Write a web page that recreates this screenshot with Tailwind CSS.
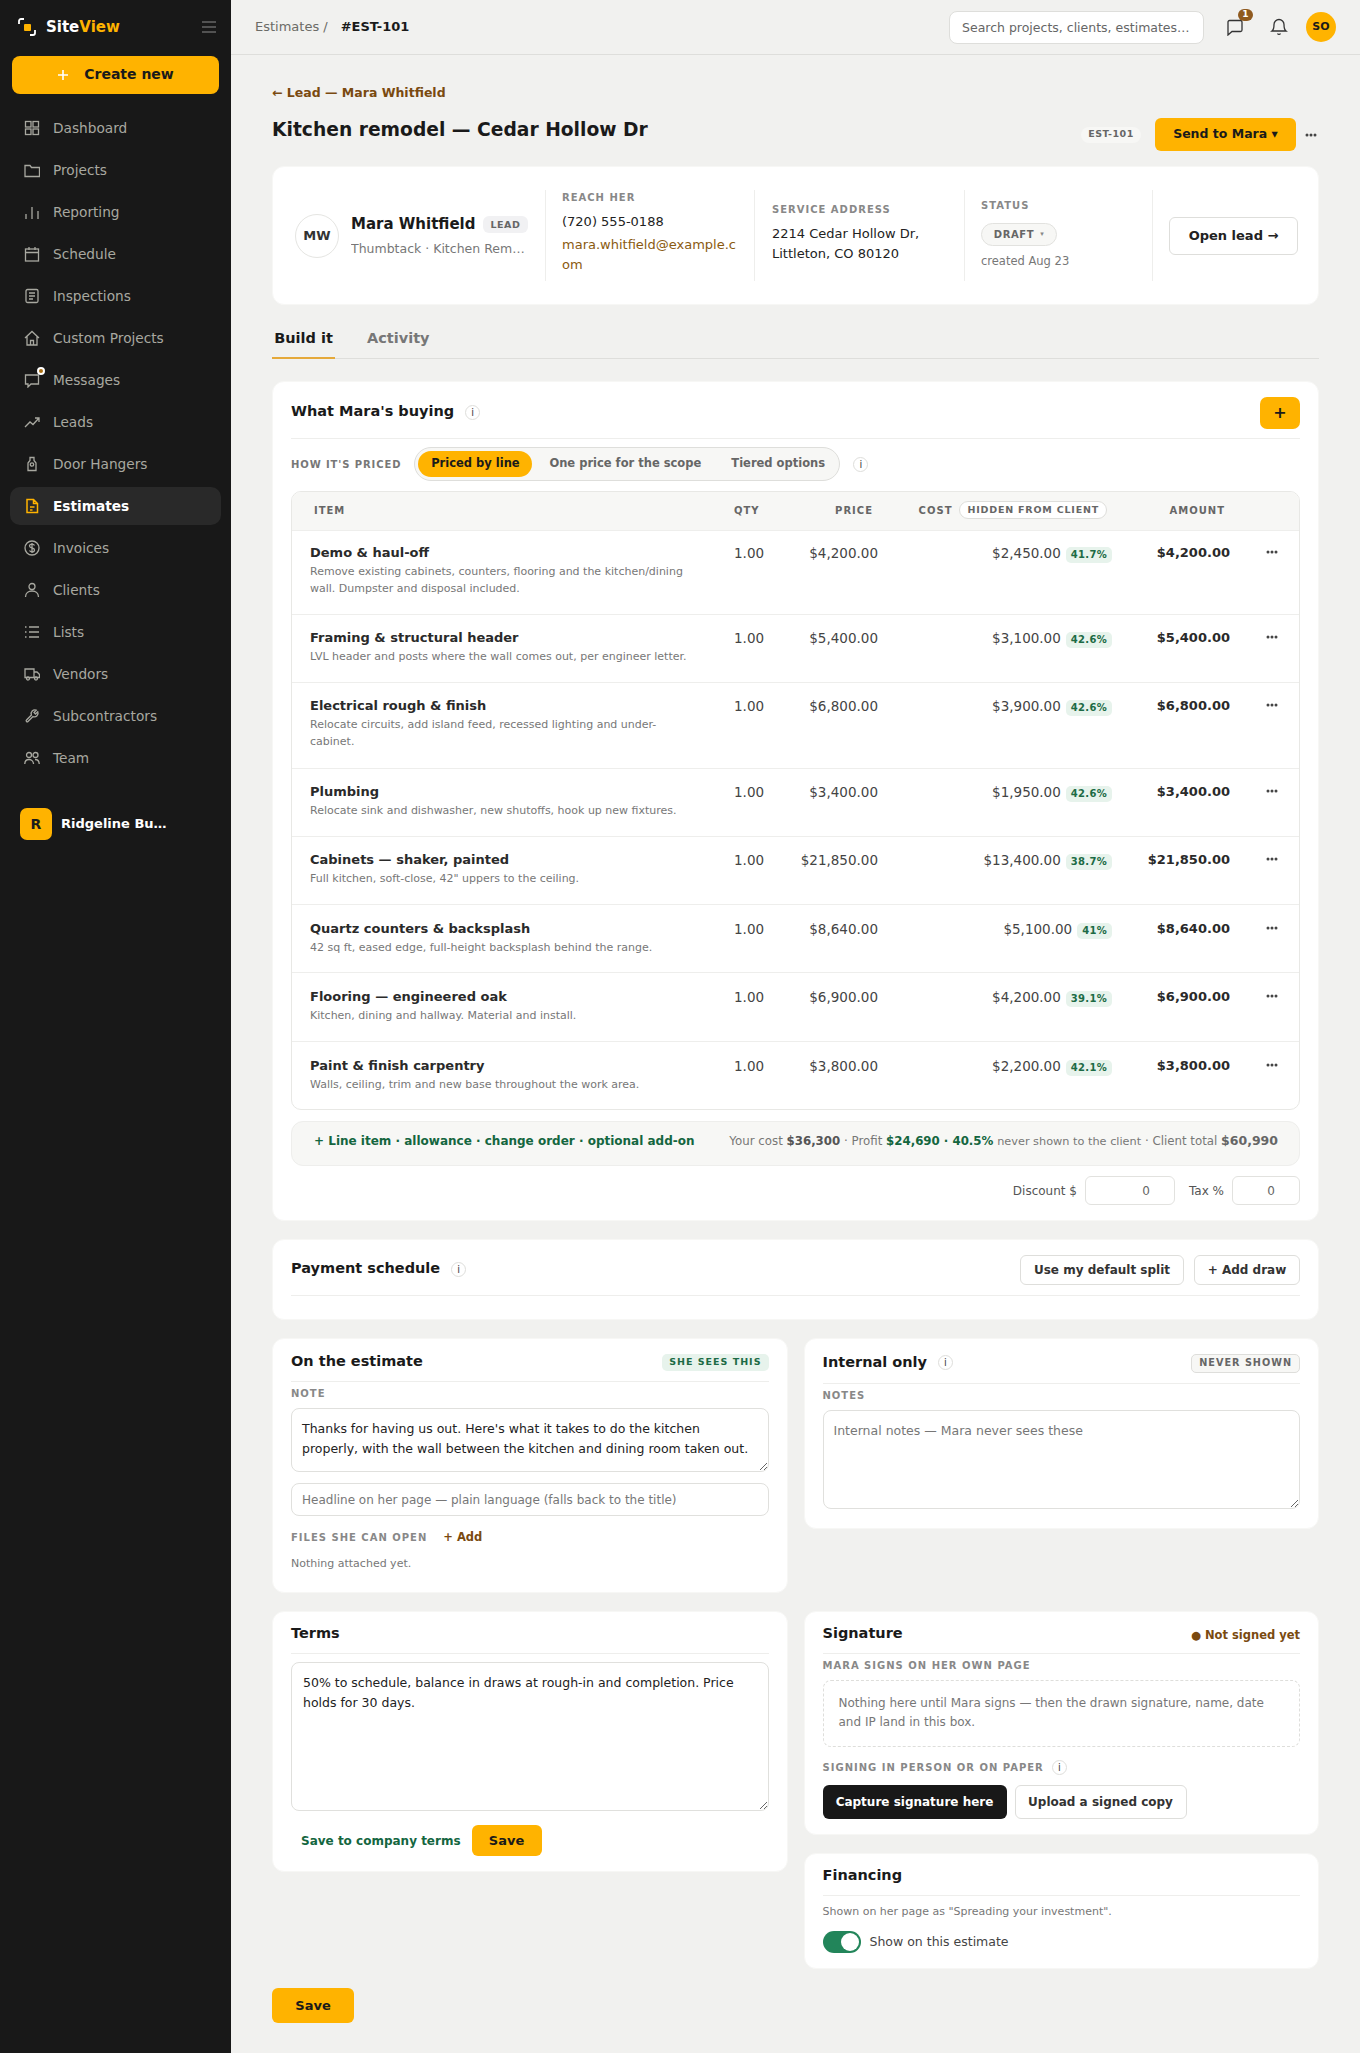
<!doctype html>
<html lang="en"><head><meta charset="utf-8"><title>Estimate</title>
<script src="https://cdn.jsdelivr.net/npm/@tailwindcss/browser@4"></script></head>
<body class="bg-[#f1f1ef] font-['DejaVu_Sans',sans-serif] text-[#1a1a1a]">
<div class="flex min-h-[2053px] w-[1360px]">
<aside class="w-[231px] shrink-0 bg-[#181818] px-[10px]">
  <div class="flex h-[54px] items-center pl-[8px] pr-[5px]">
    <svg class="h-[18px] w-[18px] shrink-0" viewBox="0 0 18 18" fill="none"><path d="M1 6V3a2 2 0 0 1 2-2h3M17 12v3a2 2 0 0 1-2 2h-3" stroke="#fff" stroke-width="1.8"/><rect x="6" y="6" width="7" height="7" rx="1" fill="#ffb300"/></svg>
    <span class="ml-[10px] text-[15px] font-bold text-white">Site<span class="text-[#ffb300]">View</span></span>
    <svg class="ml-auto h-[14px] w-[14px] text-[#666]" viewBox="0 0 14 14" fill="none" stroke="currentColor" stroke-width="1.3"><path d="M0 2h14M0 7h14M0 12h14"/></svg>
  </div>
  <button class="mx-[2px] mt-[2px] flex h-[38px] w-[207px] items-center justify-center gap-[15px] rounded-[8px] bg-[#ffb300] pb-[1px] text-[14px] font-bold text-[#1a1a1a]"><svg class="h-[12px] w-[12px]" viewBox="0 0 12 12" stroke="#fff" stroke-width="1.6"><path d="M6 1v10M1 6h10"/></svg>Create new</button>
  <nav class="mt-[15px] flex flex-col gap-[4px] text-[13.7px] text-[#a8a8a0]">
    <a class="flex h-[38px] items-center gap-[13px] rounded-[10px] pl-[14px]"><svg class="h-[16px] w-[16px]" viewBox="0 0 16 16" fill="none" stroke="currentColor" stroke-width="1.3"><rect x="1.5" y="1.5" width="5.5" height="5.5"/><rect x="9" y="1.5" width="5.5" height="5.5"/><rect x="1.5" y="9" width="5.5" height="5.5"/><rect x="9" y="9" width="5.5" height="5.5"/></svg>Dashboard</a>
    <a class="flex h-[38px] items-center gap-[13px] rounded-[10px] pl-[14px]"><svg class="h-[16px] w-[16px]" viewBox="0 0 16 16" fill="none" stroke="currentColor" stroke-width="1.3"><path d="M1 3.5h5l1.5 2H15.500v9H1z"/></svg>Projects</a>
    <a class="flex h-[38px] items-center gap-[13px] rounded-[10px] pl-[14px]"><svg class="h-[16px] w-[16px]" viewBox="0 0 16 16" fill="none" stroke="currentColor" stroke-width="1.3"><path d="M2 10v5M8 3v12M14 7v8"/></svg>Reporting</a>
    <a class="flex h-[38px] items-center gap-[13px] rounded-[10px] pl-[14px]"><svg class="h-[16px] w-[16px]" viewBox="0 0 16 16" fill="none" stroke="currentColor" stroke-width="1.3"><rect x="1.500" y="3" width="13" height="12"/><path d="M1.500 6.500h13M5 1v3M11 1v3"/></svg>Schedule</a>
    <a class="flex h-[38px] items-center gap-[13px] rounded-[10px] pl-[14px]"><svg class="h-[16px] w-[16px]" viewBox="0 0 16 16" fill="none" stroke="currentColor" stroke-width="1.3"><rect x="2" y="1.500" width="12" height="13" rx="1.500"/><path d="M5 5h6M5 8h6M5 11h4"/></svg>Inspections</a>
    <a class="flex h-[38px] items-center gap-[13px] rounded-[10px] pl-[14px]"><svg class="h-[16px] w-[16px]" viewBox="0 0 16 16" fill="none" stroke="currentColor" stroke-width="1.3"><path d="M1 8l7-6.500L15 8M3 6.500V15h10V6.500M6.500 15v-4.500h3V15"/></svg>Custom Projects</a>
    <a class="flex h-[38px] items-center gap-[13px] rounded-[10px] pl-[14px]"><span class="relative h-[16px] w-[16px]"><svg class="h-[16px] w-[16px]" viewBox="0 0 16 16" fill="none" stroke="currentColor" stroke-width="1.3"><path d="M1.500 3h13v9H7l-3 3v-3H1.500z"/></svg><span class="absolute right-[-5px] top-[-5px] h-[8px] w-[8px] rounded-full border-[2px] border-white bg-[#a96e10]"></span></span>Messages</a>
    <a class="flex h-[38px] items-center gap-[13px] rounded-[10px] pl-[14px]"><svg class="h-[16px] w-[16px]" viewBox="0 0 16 16" fill="none" stroke="currentColor" stroke-width="1.3"><path d="M1 13l5-5 3 2.500L15 4M11 4h4v4"/></svg>Leads</a>
    <a class="flex h-[38px] items-center gap-[13px] rounded-[10px] pl-[14px]"><svg class="h-[16px] w-[16px]" viewBox="0 0 16 16" fill="none" stroke="currentColor" stroke-width="1.3"><path d="M6 1.500h4v3l2 2.500v7.500H4V7l2-2.500z"/><circle cx="8" cy="8.500" r="1.700"/></svg>Door Hangers</a>
    <a class="flex h-[38px] items-center gap-[13px] rounded-[10px] bg-[#292929] pl-[16px] font-bold text-white"><svg class="ml-[-2px] h-[16px] w-[16px] text-[#ffb300]" viewBox="0 0 16 16" fill="none" stroke="currentColor" stroke-width="1.500"><path d="M3 1.500h6.500L13.500 5.500V14.500H3zM9.500 1.500v4h4M6 9h4.500M6 12h2.500"/></svg>Estimates</a>
    <a class="flex h-[38px] items-center gap-[13px] rounded-[10px] pl-[14px]"><svg class="h-[16px] w-[16px]" viewBox="0 0 16 16" fill="none" stroke="currentColor" stroke-width="1.3"><circle cx="8" cy="8" r="7"/><path d="M10.500 5.500C10 4.500 9 4.200 8 4.200c-1.500 0-2.500.8-2.500 1.900 0 2.600 5 1.200 5 3.800 0 1.100-1 1.900-2.500 1.900-1 0-2-.4-2.500-1.300M8 3v10"/></svg>Invoices</a>
    <a class="flex h-[38px] items-center gap-[13px] rounded-[10px] pl-[14px]"><svg class="h-[16px] w-[16px]" viewBox="0 0 16 16" fill="none" stroke="currentColor" stroke-width="1.3"><circle cx="8" cy="4.500" r="3"/><path d="M1.500 15c0-4 3-6 6.500-6s6.500 2 6.500 6"/></svg>Clients</a>
    <a class="flex h-[38px] items-center gap-[13px] rounded-[10px] pl-[14px]"><svg class="h-[16px] w-[16px]" viewBox="0 0 16 16" fill="none" stroke="currentColor" stroke-width="1.3"><path d="M5 3h10M5 8h10M5 13h10M1 3h1.500M1 8h1.500M1 13h1.500"/></svg>Lists</a>
    <a class="flex h-[38px] items-center gap-[13px] rounded-[10px] pl-[14px]"><svg class="h-[16px] w-[16px]" viewBox="0 0 16 16" fill="none" stroke="currentColor" stroke-width="1.3"><path d="M1 3h9v8.500H1zM10 6h3l2.500 2.500v3H10"/><circle cx="4" cy="12.500" r="1.500"/><circle cx="12" cy="12.500" r="1.500"/></svg>Vendors</a>
    <a class="flex h-[38px] items-center gap-[13px] rounded-[10px] pl-[14px]"><svg class="h-[16px] w-[16px]" viewBox="0 0 16 16" fill="none" stroke="currentColor" stroke-width="1.3"><path d="M13.800 3.800l-2.300 2.200-1.500-1.500 2.200-2.300a3.700 3.700 0 0 0-4.800 4.800L2.500 12a1 1 0 0 0 1.500 1.500l5-4.900a3.700 3.700 0 0 0 4.800-4.800z"/></svg>Subcontractors</a>
    <a class="flex h-[38px] items-center gap-[13px] rounded-[10px] pl-[14px]"><svg class="h-[16px] w-[16px]" viewBox="0 0 16 16" fill="none" stroke="currentColor" stroke-width="1.3"><circle cx="5" cy="5" r="2.500"/><circle cx="11.500" cy="5" r="2.500"/><path d="M.8 14c0-3 2-4.500 4.200-4.500S9.500 11 9.500 14M11 9.500c2.500 0 4.200 1.500 4.200 4.500"/></svg>Team</a>
  </nav>
  <div class="mt-[31px] flex items-center gap-[9px] pl-[10px]">
    <span class="flex h-[32px] w-[32px] items-center justify-center rounded-[7px] bg-[#ffb300] text-[14px] font-bold text-[#1a1a1a]">R</span>
    <span class="w-[108px] truncate text-[13px] font-bold text-white">Ridgeline Builders</span>
  </div>
</aside>
<div class="min-w-0 flex-1">
  <header class="flex h-[55px] items-center border-b border-[#dededb] pl-[24px] pr-[24px]">
    <span class="text-[13px] text-[#6b6b66]">Estimates /</span>
    <span class="ml-[13px] text-[13px] font-bold">#EST-101</span>
    <input class="ml-auto h-[33px] w-[255px] rounded-[8px] border border-[#dededb] bg-white px-[12px] text-[12.500px] placeholder:text-[#666]" placeholder="Search projects, clients, estimates…">
    <span class="relative ml-[22px] h-[18px] w-[18px]"><svg class="h-[18px] w-[18px] text-[#333]" viewBox="0 0 18 18" fill="none" stroke="currentColor" stroke-width="1.3"><path d="M3.500 2.500h11a1.500 1.500 0 0 1 1.500 1.500v8a1.500 1.500 0 0 1-1.500 1.500H6L2 17V4a1.500 1.500 0 0 1 1.500-1.500z"/></svg><span class="absolute right-[-9px] top-[-9px] flex h-[12px] w-[15px] items-center justify-center rounded-full bg-[#8f5a1f] text-[9px] font-bold text-white">1</span></span>
    <svg class="ml-[26px] h-[18px] w-[18px] text-[#333]" viewBox="0 0 18 18" fill="none" stroke="currentColor" stroke-width="1.3"><path d="M9 1.500a5 5 0 0 0-5 5c0 5-2 6.500-2 6.500h14s-2-1.500-2-6.500a5 5 0 0 0-5-5zM7.500 15.500a1.700 1.700 0 0 0 3 0"/></svg>
    <span class="ml-[18px] flex h-[30px] w-[30px] items-center justify-center rounded-full bg-[#ffb300] text-[11px] font-bold">SO</span>
  </header>
  <main class="pl-[41px] pr-[41px]">
    <a class="mt-[29px] block text-[12.500px] font-semibold leading-[18px] text-[#7a4a10]">← Lead — Mara Whitfield</a>
    <div class="mt-[16px] flex h-[33px] items-center">
      <h1 class="mb-[9px] text-[18.700px] font-bold">Kitchen remodel — Cedar Hollow Dr</h1>
      <span class="ml-auto flex h-[16px] w-[60px] items-center justify-center rounded-[8px] bg-[#f7f7f5] text-[9.500px] font-semibold tracking-[0.5px] text-[#666]">EST-101</span>
      <button class="ml-[14px] h-[33px] w-[141px] rounded-[6px] bg-[#ffb300] text-[12.500px] font-bold">Send to Mara ▾</button>
      <svg class="ml-[9px] mr-[2px] h-[4px] w-[12px] text-[#444]" viewBox="0 0 12 4" fill="currentColor"><circle cx="2" cy="2" r="1.500"/><circle cx="6" cy="2" r="1.500"/><circle cx="10" cy="2" r="1.500"/></svg>
    </div>
    <section class="mt-[15px] flex h-[139px] items-center rounded-[12px] border border-[#f7f7f5] bg-white pl-[22px]">
      <div class="flex h-[91px] w-[251px] shrink-0 items-center border-r border-[#eeeeec]">
        <span class="flex h-[44px] w-[44px] shrink-0 items-center justify-center rounded-full border border-[#e5e5e2] text-[13px] font-semibold text-[#333]">MW</span>
        <div class="ml-[12px] min-w-0">
          <div class="flex items-center gap-[7px]"><b class="text-[15px] font-semibold">Mara Whitfield</b><span class="rounded-[6px] bg-[#f1f1f3] px-[8px] py-[2px] text-[9.500px] font-semibold leading-[13px] tracking-[0.5px] text-[#666]">LEAD</span></div>
          <div class="mt-[4px] w-[176px] truncate text-[12.500px] leading-[18px] text-[#777]">Thumbtack · Kitchen Remodel</div>
        </div>
      </div>
      <div class="flex h-[91px] w-[209px] shrink-0 flex-col justify-center border-r border-[#eeeeec] pb-[5px] pl-[16px] pr-[12px]">
        <div class="text-[10px] font-semibold leading-[14px] tracking-[1px] text-[#888]">REACH HER</div>
        <div class="mt-[7px] text-[13px] leading-[20px] text-[#222]">(720) 555-0188</div>
        <div class="mt-[3px] break-all text-[13px] leading-[20px] text-[#8a5a10]">mara.whitfield@example.com</div>
      </div>
      <div class="flex h-[91px] w-[210px] shrink-0 flex-col justify-center border-r border-[#eeeeec] pb-[4px] pl-[17px] pr-[12px]">
        <div class="text-[10px] font-semibold leading-[14px] tracking-[1px] text-[#888]">SERVICE ADDRESS</div>
        <div class="mt-[7px] text-[13px] leading-[20px] text-[#222]">2214 Cedar Hollow Dr,<br>Littleton, CO 80120</div>
      </div>
      <div class="flex h-[91px] w-[188px] shrink-0 flex-col justify-center border-r border-[#eeeeec] pb-[2px] pl-[16px]">
        <div class="text-[10px] font-semibold leading-[14px] tracking-[1px] text-[#888]">STATUS</div>
        <div class="mt-[10px] flex h-[23px] w-[76px] items-center justify-center gap-[6px] rounded-full border border-[#e2e2df] bg-[#f7f7f5] text-[10px] font-semibold tracking-[0.6px] text-[#666]">DRAFT <span class="text-[7px] text-[#888]">▾</span></div>
        <div class="mt-[6px] text-[11.500px] leading-[18px] text-[#777]">created Aug 23</div>
      </div>
      <button class="ml-[16px] h-[38px] w-[129px] rounded-[6px] border border-[#dededb] text-[13px] font-semibold text-[#222]">Open lead →</button>
    </section>
    <div class="mt-[14px] flex h-[40px] border-b border-[#dededb] text-[14.500px]">
      <span class="flex h-[40px] w-[63px] justify-center border-b-[2px] border-[#e5a93a] pt-[9px] font-bold">Build it</span>
      <span class="ml-[32px] pt-[9px] font-semibold text-[#777]">Activity</span>
    </div>
    <section class="mt-[22px] rounded-[12px] border border-[#f7f7f5] bg-white px-[18px] pt-[15px] pb-[15px]">
      <div class="flex h-[42px] items-start border-b border-[#eeeeec]">
        <h2 class="mt-[4px] text-[14.500px] font-semibold">What Mara's buying</h2>
        <span class="ml-[11px] mt-[8px] flex h-[15px] w-[15px] items-center justify-center rounded-full border border-[#dededb] text-[10px] text-[#444]">i</span>
        <button class="ml-auto flex h-[32px] w-[40px] items-center justify-center rounded-[7px] bg-[#ffb300] text-[16px] font-bold">+</button>
      </div>
      <div class="mt-[8px] flex h-[34px] items-center">
        <span class="text-[10px] font-semibold tracking-[0.9px] text-[#777]">HOW IT'S PRICED</span>
        <div class="ml-[13px] flex h-[34px] w-[426px] items-center rounded-full border border-[#dededb] bg-[#f7f7f5] pl-[3px] text-[11.500px] font-semibold text-[#666]">
          <span class="flex h-[26px] w-[114px] items-center justify-center rounded-full bg-[#ffb300] text-[#1a1a1a]">Priced by line</span>
          <span class="ml-[17px]">One price for the scope</span><span class="ml-[30px]">Tiered options</span>
        </div>
        <span class="ml-[13px] flex h-[15px] w-[15px] items-center justify-center rounded-full border border-[#dededb] text-[10px] text-[#444]">i</span>
      </div>
      <div class="mt-[10px] overflow-hidden rounded-[10px] border border-[#e8e8e5]">
        <div class="grid h-[38px] grid-cols-[442px_60px_84px_234px_118px_69px] items-center bg-[#f7f7f5] pb-[2px] text-[10px] font-semibold tracking-[1px] text-[#666]">
          <span class="pl-[22px]">ITEM</span><span>QTY</span><span class="pr-[5px] text-right">PRICE</span>
          <span class="flex items-center justify-end gap-[7px] pr-[5px]">COST <span class="rounded-full border border-[#dededb] bg-white px-[7px] py-[1px] text-[9.500px] leading-[14px] tracking-[0.8px]">HIDDEN FROM CLIENT</span></span>
          <span class="pr-[5px] text-right">AMOUNT</span><span></span>
        </div>

        <div class="grid h-[84px] grid-cols-[442px_60px_84px_234px_118px_69px] border-t border-[#eeeeec] pt-[12px] text-[13.500px] leading-[20px] text-[#444]">
          <div class="pl-[18px]"><b class="block text-[13px] font-semibold text-[#2a2a2a]">Demo &amp; haul-off</b><p class="w-[390px] text-[11px] leading-[17px] text-[#777]">Remove existing cabinets, counters, flooring and the kitchen/dining wall. Dumpster and disposal included.</p></div>
          <span>1.00</span><span class="text-right">$4,200.00</span>
          <span class="flex items-start justify-end gap-[5px]">$2,450.00 <i class="mt-[4px] rounded-[5px] bg-[#e7f3ec] px-[5px] text-[10px] font-semibold not-italic leading-[16px] tracking-[0.3px] text-[#1d6b45]">41.7%</i></span>
          <b class="text-right text-[13px] text-[#2a2a2a]">$4,200.00</b>
          <span class="pr-[21px] text-right text-[#444]"><svg class="ml-auto mt-[7px] h-[4px] w-[12px]" viewBox="0 0 12 4" fill="currentColor"><circle cx="2" cy="2" r="1.500"/><circle cx="6" cy="2" r="1.500"/><circle cx="10" cy="2" r="1.500"/></svg></span>
        </div>
        <div class="grid h-[68px] grid-cols-[442px_60px_84px_234px_118px_69px] border-t border-[#eeeeec] pt-[13px] text-[13.500px] leading-[20px] text-[#444]">
          <div class="pl-[18px]"><b class="block text-[13px] font-semibold text-[#2a2a2a]">Framing &amp; structural header</b><p class="w-[390px] text-[11px] leading-[17px] text-[#777]">LVL header and posts where the wall comes out, per engineer letter.</p></div>
          <span>1.00</span><span class="text-right">$5,400.00</span>
          <span class="flex items-start justify-end gap-[5px]">$3,100.00 <i class="mt-[4px] rounded-[5px] bg-[#e7f3ec] px-[5px] text-[10px] font-semibold not-italic leading-[16px] tracking-[0.3px] text-[#1d6b45]">42.6%</i></span>
          <b class="text-right text-[13px] text-[#2a2a2a]">$5,400.00</b>
          <span class="pr-[21px] text-right text-[#444]"><svg class="ml-auto mt-[7px] h-[4px] w-[12px]" viewBox="0 0 12 4" fill="currentColor"><circle cx="2" cy="2" r="1.500"/><circle cx="6" cy="2" r="1.500"/><circle cx="10" cy="2" r="1.500"/></svg></span>
        </div>
        <div class="grid h-[86px] grid-cols-[442px_60px_84px_234px_118px_69px] border-t border-[#eeeeec] pt-[13px] text-[13.500px] leading-[20px] text-[#444]">
          <div class="pl-[18px]"><b class="block text-[13px] font-semibold text-[#2a2a2a]">Electrical rough &amp; finish</b><p class="w-[390px] text-[11px] leading-[17px] text-[#777]">Relocate circuits, add island feed, recessed lighting and under-cabinet.</p></div>
          <span>1.00</span><span class="text-right">$6,800.00</span>
          <span class="flex items-start justify-end gap-[5px]">$3,900.00 <i class="mt-[4px] rounded-[5px] bg-[#e7f3ec] px-[5px] text-[10px] font-semibold not-italic leading-[16px] tracking-[0.3px] text-[#1d6b45]">42.6%</i></span>
          <b class="text-right text-[13px] text-[#2a2a2a]">$6,800.00</b>
          <span class="pr-[21px] text-right text-[#444]"><svg class="ml-auto mt-[7px] h-[4px] w-[12px]" viewBox="0 0 12 4" fill="currentColor"><circle cx="2" cy="2" r="1.500"/><circle cx="6" cy="2" r="1.500"/><circle cx="10" cy="2" r="1.500"/></svg></span>
        </div>
        <div class="grid h-[68px] grid-cols-[442px_60px_84px_234px_118px_69px] border-t border-[#eeeeec] pt-[13px] text-[13.500px] leading-[20px] text-[#444]">
          <div class="pl-[18px]"><b class="block text-[13px] font-semibold text-[#2a2a2a]">Plumbing</b><p class="w-[390px] text-[11px] leading-[17px] text-[#777]">Relocate sink and dishwasher, new shutoffs, hook up new fixtures.</p></div>
          <span>1.00</span><span class="text-right">$3,400.00</span>
          <span class="flex items-start justify-end gap-[5px]">$1,950.00 <i class="mt-[4px] rounded-[5px] bg-[#e7f3ec] px-[5px] text-[10px] font-semibold not-italic leading-[16px] tracking-[0.3px] text-[#1d6b45]">42.6%</i></span>
          <b class="text-right text-[13px] text-[#2a2a2a]">$3,400.00</b>
          <span class="pr-[21px] text-right text-[#444]"><svg class="ml-auto mt-[7px] h-[4px] w-[12px]" viewBox="0 0 12 4" fill="currentColor"><circle cx="2" cy="2" r="1.500"/><circle cx="6" cy="2" r="1.500"/><circle cx="10" cy="2" r="1.500"/></svg></span>
        </div>
        <div class="grid h-[68px] grid-cols-[442px_60px_84px_234px_118px_69px] border-t border-[#eeeeec] pt-[13px] text-[13.500px] leading-[20px] text-[#444]">
          <div class="pl-[18px]"><b class="block text-[13px] font-semibold text-[#2a2a2a]">Cabinets — shaker, painted</b><p class="w-[390px] text-[11px] leading-[17px] text-[#777]">Full kitchen, soft-close, 42" uppers to the ceiling.</p></div>
          <span>1.00</span><span class="text-right">$21,850.00</span>
          <span class="flex items-start justify-end gap-[5px]">$13,400.00 <i class="mt-[4px] rounded-[5px] bg-[#e7f3ec] px-[5px] text-[10px] font-semibold not-italic leading-[16px] tracking-[0.3px] text-[#1d6b45]">38.7%</i></span>
          <b class="text-right text-[13px] text-[#2a2a2a]">$21,850.00</b>
          <span class="pr-[21px] text-right text-[#444]"><svg class="ml-auto mt-[7px] h-[4px] w-[12px]" viewBox="0 0 12 4" fill="currentColor"><circle cx="2" cy="2" r="1.500"/><circle cx="6" cy="2" r="1.500"/><circle cx="10" cy="2" r="1.500"/></svg></span>
        </div>
        <div class="grid h-[68px] grid-cols-[442px_60px_84px_234px_118px_69px] border-t border-[#eeeeec] pt-[14px] text-[13.500px] leading-[20px] text-[#444]">
          <div class="pl-[18px]"><b class="block text-[13px] font-semibold text-[#2a2a2a]">Quartz counters &amp; backsplash</b><p class="w-[390px] text-[11px] leading-[17px] text-[#777]">42 sq ft, eased edge, full-height backsplash behind the range.</p></div>
          <span>1.00</span><span class="text-right">$8,640.00</span>
          <span class="flex items-start justify-end gap-[5px]">$5,100.00 <i class="mt-[4px] rounded-[5px] bg-[#e7f3ec] px-[5px] text-[10px] font-semibold not-italic leading-[16px] tracking-[0.3px] text-[#1d6b45]">41%</i></span>
          <b class="text-right text-[13px] text-[#2a2a2a]">$8,640.00</b>
          <span class="pr-[21px] text-right text-[#444]"><svg class="ml-auto mt-[7px] h-[4px] w-[12px]" viewBox="0 0 12 4" fill="currentColor"><circle cx="2" cy="2" r="1.500"/><circle cx="6" cy="2" r="1.500"/><circle cx="10" cy="2" r="1.500"/></svg></span>
        </div>
        <div class="grid h-[69px] grid-cols-[442px_60px_84px_234px_118px_69px] border-t border-[#eeeeec] pt-[14px] text-[13.500px] leading-[20px] text-[#444]">
          <div class="pl-[18px]"><b class="block text-[13px] font-semibold text-[#2a2a2a]">Flooring — engineered oak</b><p class="w-[390px] text-[11px] leading-[17px] text-[#777]">Kitchen, dining and hallway. Material and install.</p></div>
          <span>1.00</span><span class="text-right">$6,900.00</span>
          <span class="flex items-start justify-end gap-[5px]">$4,200.00 <i class="mt-[4px] rounded-[5px] bg-[#e7f3ec] px-[5px] text-[10px] font-semibold not-italic leading-[16px] tracking-[0.3px] text-[#1d6b45]">39.1%</i></span>
          <b class="text-right text-[13px] text-[#2a2a2a]">$6,900.00</b>
          <span class="pr-[21px] text-right text-[#444]"><svg class="ml-auto mt-[7px] h-[4px] w-[12px]" viewBox="0 0 12 4" fill="currentColor"><circle cx="2" cy="2" r="1.500"/><circle cx="6" cy="2" r="1.500"/><circle cx="10" cy="2" r="1.500"/></svg></span>
        </div>
        <div class="grid h-[68px] grid-cols-[442px_60px_84px_234px_118px_69px] border-t border-[#eeeeec] pt-[14px] text-[13.500px] leading-[20px] text-[#444]">
          <div class="pl-[18px]"><b class="block text-[13px] font-semibold text-[#2a2a2a]">Paint &amp; finish carpentry</b><p class="w-[390px] text-[11px] leading-[17px] text-[#777]">Walls, ceiling, trim and new base throughout the work area.</p></div>
          <span>1.00</span><span class="text-right">$3,800.00</span>
          <span class="flex items-start justify-end gap-[5px]">$2,200.00 <i class="mt-[4px] rounded-[5px] bg-[#e7f3ec] px-[5px] text-[10px] font-semibold not-italic leading-[16px] tracking-[0.3px] text-[#1d6b45]">42.1%</i></span>
          <b class="text-right text-[13px] text-[#2a2a2a]">$3,800.00</b>
          <span class="pr-[21px] text-right text-[#444]"><svg class="ml-auto mt-[7px] h-[4px] w-[12px]" viewBox="0 0 12 4" fill="currentColor"><circle cx="2" cy="2" r="1.500"/><circle cx="6" cy="2" r="1.500"/><circle cx="10" cy="2" r="1.500"/></svg></span>
        </div>
      </div>
      <div class="mt-[11px] flex h-[45px] items-center justify-between rounded-[12px] border border-[#eeeeec] bg-[#f7f7f5] pb-[5px] pl-[22px] pr-[21px]">
        <span class="text-[12px] font-semibold text-[#14663f]">+ Line item · allowance · change order · optional add-on</span>
        <span class="text-[11.800px] text-[#777]">Your cost <b class="font-semibold text-[#555]">$36,300</b> · Profit <b class="font-semibold text-[#14663f]">$24,690 · 40.5%</b> <span class="text-[11.300px]">never shown to the client</span> · Client total <b class="text-[12.500px] font-semibold text-[#666]">$60,990</b></span>
      </div>
      <div class="mt-[10px] flex items-center justify-end text-[12px] text-[#555]">
        <span>Discount $</span><input class="ml-[8px] h-[29px] w-[90px] rounded-[6px] border border-[#e2e2df] pr-[24px] text-right text-[12px] text-[#666]" value="0">
        <span class="ml-[14px]">Tax %</span><input class="ml-[8px] h-[29px] w-[68px] rounded-[6px] border border-[#e2e2df] pr-[24px] text-right text-[12px] text-[#666]" value="0">
      </div>
    </section>
    <section class="mt-[18px] h-[81px] rounded-[12px] border border-[#f7f7f5] bg-white px-[18px] pt-[15px]">
      <div class="flex h-[41px] items-start border-b border-[#eeeeec]">
        <h2 class="mt-[3px] text-[14.500px] font-semibold">Payment schedule</h2>
        <span class="ml-[11px] mt-[7px] flex h-[15px] w-[15px] items-center justify-center rounded-full border border-[#dededb] text-[10px] text-[#444]">i</span>
        <button class="ml-auto h-[30px] w-[164px] rounded-[6px] border border-[#dededb] text-[12px] font-semibold text-[#333]">Use my default split</button>
        <button class="ml-[10px] h-[30px] w-[106px] rounded-[6px] border border-[#dededb] text-[12px] font-semibold text-[#333]">+ Add draw</button>
      </div>
    </section>
    <div class="mt-[18px] grid grid-cols-2 items-start gap-x-[16px] gap-y-[18px]">
      <section class="h-[255px] rounded-[12px] border border-[#f7f7f5] bg-white px-[18px] pt-[15px]">
        <div class="flex h-[28px] items-start justify-between border-b border-[#eeeeec]"><h2 class="mt-[-3px] text-[14.500px] font-semibold">On the estimate</h2><span class="flex h-[17px] items-center rounded-[5px] bg-[#e7f3ec] px-[7px] text-[9.500px] font-semibold tracking-[1px] text-[#1d6b45]">SHE SEES THIS</span></div>
        <div class="mt-[5px] text-[10px] font-semibold leading-[14px] tracking-[1px] text-[#888]">NOTE</div>
        <textarea class="mt-[7px] block h-[64px] w-full rounded-[8px] border border-[#e0e0dd] px-[10px] py-[10px] text-[12.500px] leading-[20px] text-[#222]">Thanks for having us out. Here's what it takes to do the kitchen properly, with the wall between the kitchen and dining room taken out.</textarea>
        <input class="mt-[11px] block h-[33px] w-full rounded-[8px] border border-[#e0e0dd] px-[10px] text-[12px] placeholder:text-[#777]" placeholder="Headline on her page — plain language (falls back to the title)">
        <div class="mt-[13px] flex items-center"><span class="text-[10px] font-semibold tracking-[1px] text-[#888]">FILES SHE CAN OPEN</span><span class="ml-[16px] text-[11.500px] font-semibold text-[#7a4a10]">+ Add</span></div>
        <div class="mt-[10px] text-[11px] leading-[16px] text-[#777]">Nothing attached yet.</div>
      </section>
      <section class="h-[191px] rounded-[12px] border border-[#f7f7f5] bg-white px-[18px] pt-[15px]">
        <div class="flex h-[30px] items-start justify-between border-b border-[#eeeeec]"><div class="mt-[-2px] flex items-center"><h2 class="text-[14.500px] font-semibold">Internal only</h2><span class="ml-[11px] flex h-[15px] w-[15px] items-center justify-center rounded-full border border-[#dededb] text-[10px] text-[#444]">i</span></div><span class="flex h-[19px] items-center rounded-[5px] border border-[#dededb] bg-[#f7f7f5] px-[7px] text-[9.700px] font-semibold tracking-[1px] text-[#666]">NEVER SHOWN</span></div>
        <div class="mt-[5px] text-[10px] font-semibold leading-[14px] tracking-[1px] text-[#888]">NOTES</div>
        <textarea class="mt-[7px] block h-[99px] w-full rounded-[8px] border border-[#e0e0dd] px-[10px] py-[10px] text-[12.500px] leading-[20px] placeholder:text-[#777]" placeholder="Internal notes — Mara never sees these"></textarea>
      </section>
      <section class="h-[261px] rounded-[12px] border border-[#f7f7f5] bg-white px-[18px] pt-[13px]">
        <div class="flex h-[29px] items-start border-b border-[#eeeeec]"><h2 class="mt-[-2px] text-[14.500px] font-semibold">Terms</h2></div>
        <textarea class="mt-[8px] block h-[149px] w-full rounded-[8px] border border-[#e0e0dd] px-[11px] py-[10px] text-[12.500px] leading-[20px] text-[#222]">50% to schedule, balance in draws at rough-in and completion. Price holds for 30 days.</textarea>
        <div class="mt-[14px] flex items-center pl-[10px]"><span class="text-[12px] font-semibold text-[#14663f]">Save to company terms</span><button class="ml-[11px] h-[31px] w-[70px] rounded-[6px] bg-[#ffb300] text-[13px] font-bold">Save</button></div>
      </section>
      <div class="flex flex-col gap-[18px]">
        <section class="h-[224px] rounded-[12px] border border-[#f7f7f5] bg-white px-[18px] pt-[13px]">
          <div class="flex h-[29px] items-start justify-between border-b border-[#eeeeec]"><h2 class="mt-[-2px] text-[14.500px] font-semibold">Signature</h2><span class="mt-[2px] text-[11.500px] font-semibold text-[#7a4a10]">● Not signed yet</span></div>
          <div class="mt-[5px] text-[10px] font-semibold leading-[14px] tracking-[1px] text-[#888]">MARA SIGNS ON HER OWN PAGE</div>
          <div class="mt-[7px] h-[67px] rounded-[8px] border border-dashed border-[#dededb] px-[15px] py-[13px] text-[12px] leading-[19px] text-[#777]">Nothing here until Mara signs — then the drawn signature, name, date and IP land in this box.</div>
          <div class="mt-[13px] flex items-center"><span class="text-[10px] font-semibold tracking-[1px] text-[#888]">SIGNING IN PERSON OR ON PAPER</span><span class="ml-[8px] flex h-[15px] w-[15px] items-center justify-center rounded-full border border-[#dededb] text-[10px] text-[#444]">i</span></div>
          <div class="mt-[10px] flex gap-[8px]"><button class="h-[34px] w-[184px] rounded-[6px] bg-[#181818] text-[12px] font-semibold text-white">Capture signature here</button><button class="h-[34px] w-[172px] rounded-[6px] border border-[#dededb] text-[12px] font-semibold text-[#333]">Upload a signed copy</button></div>
        </section>
        <section class="h-[116px] rounded-[12px] border border-[#f7f7f5] bg-white px-[18px] pt-[13px]">
          <div class="flex h-[29px] items-start border-b border-[#eeeeec]"><h2 class="mt-[-2px] text-[14.500px] font-semibold">Financing</h2></div>
          <p class="mt-[8px] text-[11px] leading-[16px] text-[#777]">Shown on her page as "Spreading your investment".</p>
          <div class="mt-[11px] flex items-center gap-[9px] text-[12.500px] text-[#444]"><span class="flex h-[22px] w-[38px] items-center justify-end rounded-full bg-[#22855a] pr-[2px]"><span class="h-[18px] w-[18px] rounded-full bg-white"></span></span>Show on this estimate</div>
        </section>
      </div>
    </div>
    <button class="mt-[19px] block h-[35px] w-[82px] rounded-[6px] bg-[#ffb300] text-[13px] font-bold">Save</button>
  </main>
</div>
</div>
</body></html>
